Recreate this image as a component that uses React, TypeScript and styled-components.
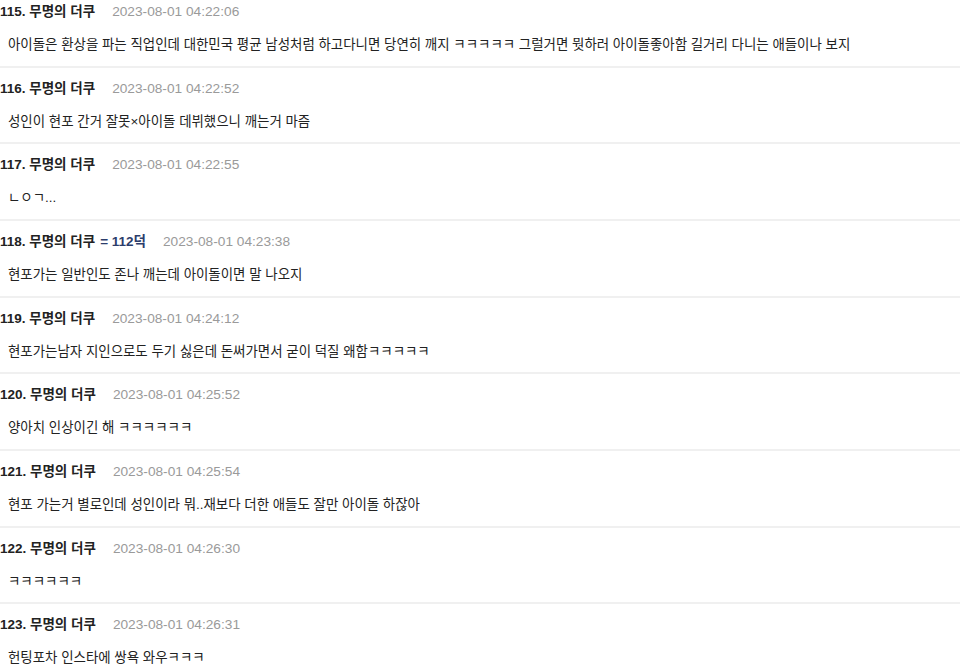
import React from "react";
import styled, { createGlobalStyle } from "styled-components";

const Global = createGlobalStyle`
  html, body { margin: 0; padding: 0; background: #fff; }
  body { overflow: hidden; font-family: "Liberation Sans", "Noto Sans CJK KR", sans-serif; }
`;

const List = styled.ul`
  list-style: none;
  margin: -9px 0 0;
  padding: 0;
  width: 960px;
`;

const Item = styled.li`
  padding: 11px 0 10.67px;
  border-bottom: 2px solid #f0f0f0;
`;

const Header = styled.div`
  display: flex;
  align-items: center;
  height: 20px;
  line-height: 20px;
`;

const Name = styled.span`
  font-size: 13.5px;
  font-weight: 700;
  color: #222;
`;

const Extra = styled.span`
  margin-left: 5px;
  font-size: 13.5px;
  font-weight: 700;
  color: #2c3d6b;
`;

const DateText = styled.span`
  margin-left: 17px;
  font-size: 13.7px;
  color: #9a9a9a;
`;

const Content = styled.p`
  margin: 13px 0 0 8px;
  height: 20px;
  line-height: 20px;
  font-size: 13.45px;
  color: #222;
  white-space: nowrap;
`;

type Comment = { no: number; date: string; text: string; extra?: string };

const comments: Comment[] = [
  { no: 115, date: "2023-08-01 04:22:06", text: "아이돌은 환상을 파는 직업인데 대한민국 평균 남성처럼 하고다니면 당연히 깨지 ㅋㅋㅋㅋㅋ 그럴거면 뭣하러 아이돌좋아함 길거리 다니는 애들이나 보지" },
  { no: 116, date: "2023-08-01 04:22:52", text: "성인이 현포 간거 잘못×아이돌 데뷔했으니 깨는거 마즘" },
  { no: 117, date: "2023-08-01 04:22:55", text: "ㄴㅇㄱ..." },
  { no: 118, date: "2023-08-01 04:23:38", text: "현포가는 일반인도 존나 깨는데 아이돌이면 말 나오지", extra: "= 112덕" },
  { no: 119, date: "2023-08-01 04:24:12", text: "현포가는남자 지인으로도 두기 싫은데 돈써가면서 굳이 덕질 왜함ㅋㅋㅋㅋㅋ" },
  { no: 120, date: "2023-08-01 04:25:52", text: "양아치 인상이긴 해 ㅋㅋㅋㅋㅋㅋ" },
  { no: 121, date: "2023-08-01 04:25:54", text: "현포 가는거 별로인데 성인이라 뭐..재보다 더한 애들도 잘만 아이돌 하잖아" },
  { no: 122, date: "2023-08-01 04:26:30", text: "ㅋㅋㅋㅋㅋㅋ" },
  { no: 123, date: "2023-08-01 04:26:31", text: "헌팅포차 인스타에 쌍욕 와우ㅋㅋㅋ" },
];

export default function App() {
  return (
    <>
      <Global />
      <List>
        {comments.map((c) => (
          <Item key={c.no}>
            <Header>
              <Name>{c.no}. 무명의 더쿠</Name>
              {c.extra && <Extra>{c.extra}</Extra>}
              <DateText>{c.date}</DateText>
            </Header>
            <Content>{c.text}</Content>
          </Item>
        ))}
      </List>
    </>
  );
}
